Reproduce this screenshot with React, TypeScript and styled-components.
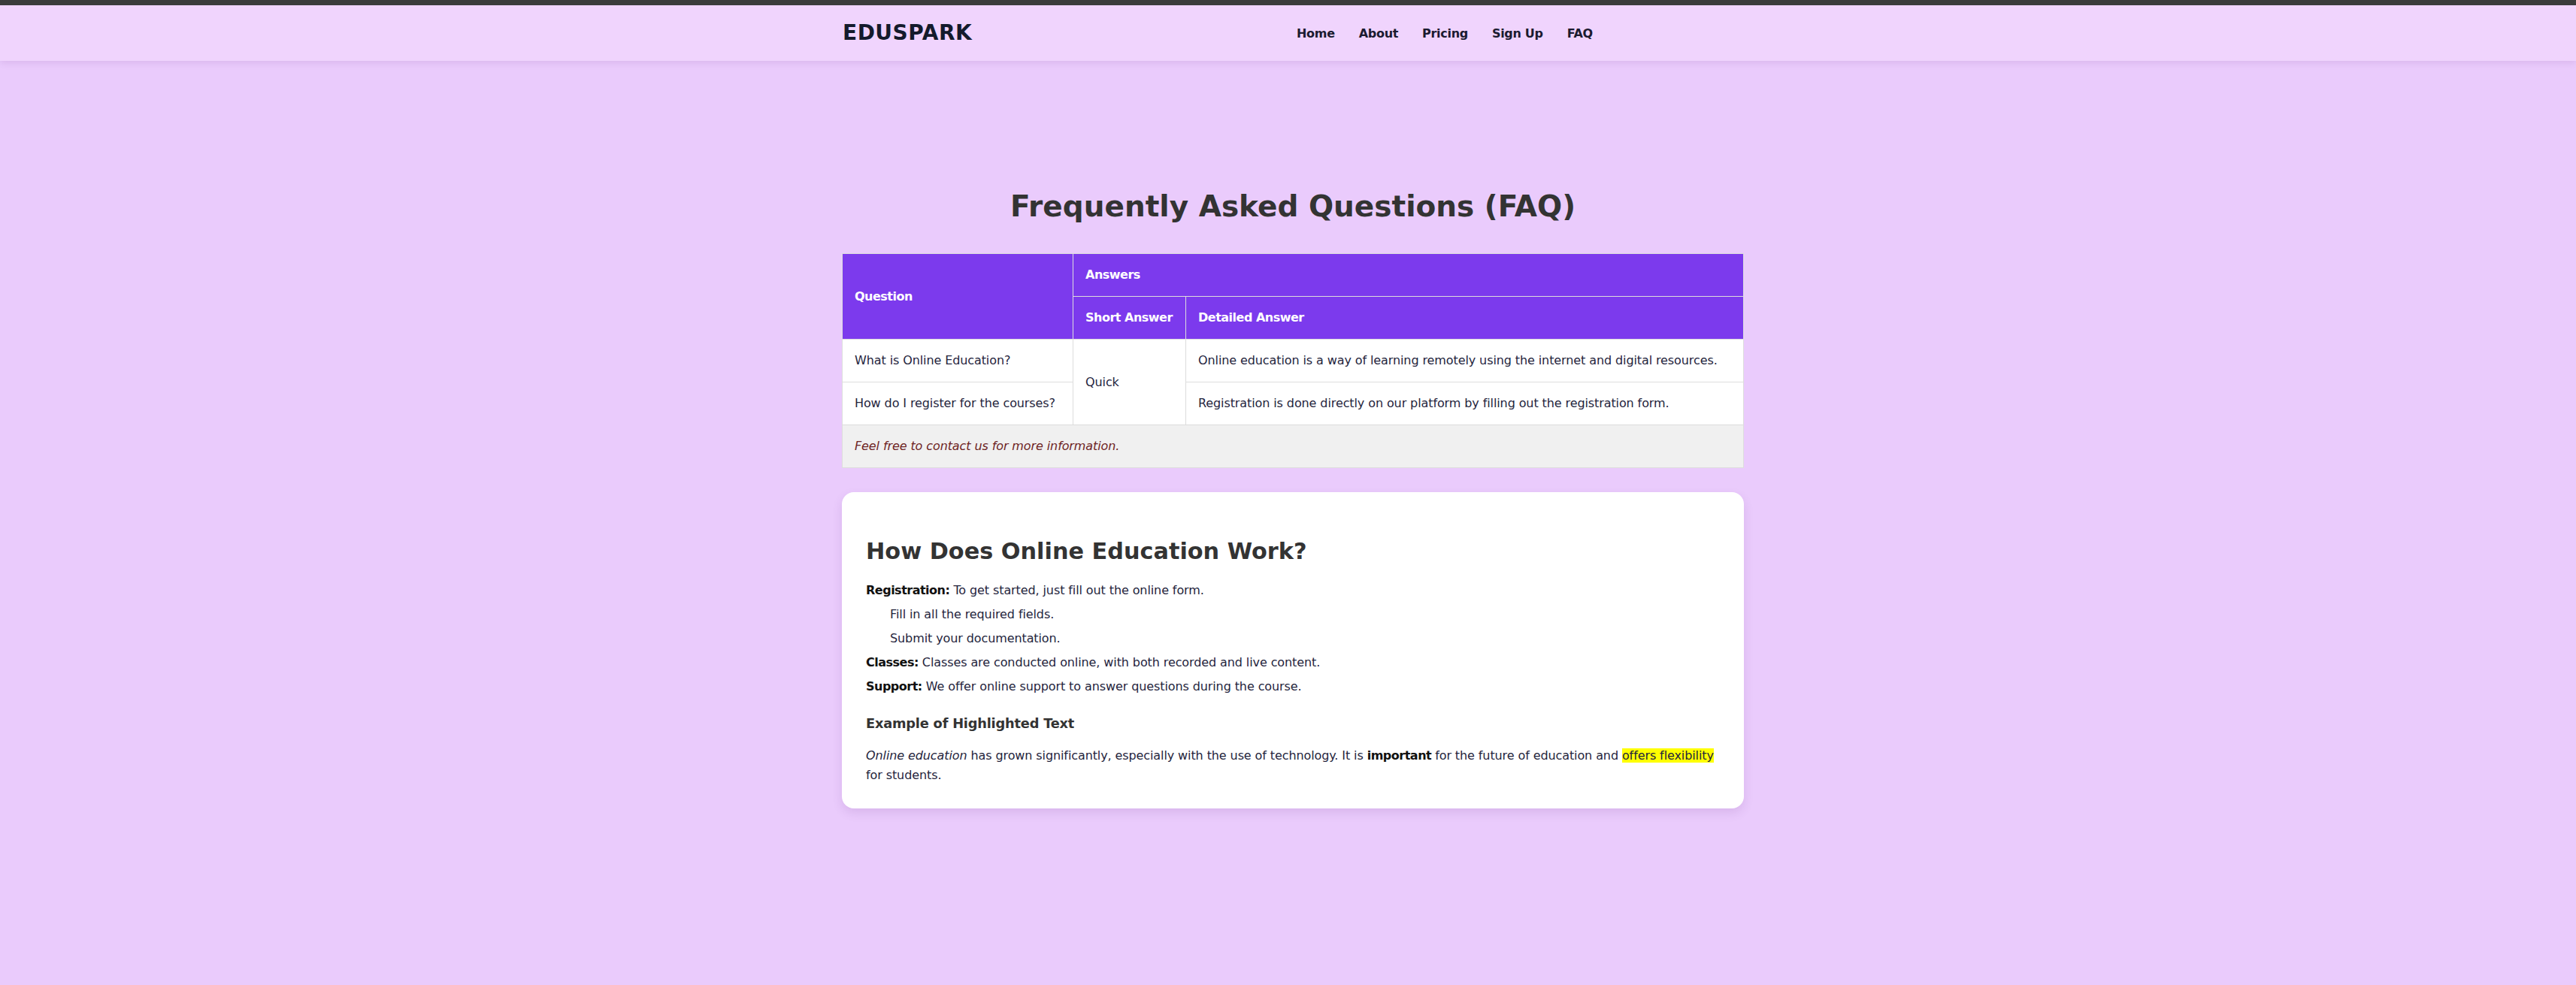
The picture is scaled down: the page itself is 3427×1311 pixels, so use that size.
import React from "react";
import styled, { createGlobalStyle } from "styled-components";

const GlobalStyle = createGlobalStyle`
  html, body {
    margin: 0;
    padding: 0;
  }
  body {
    background: #eacbfc;
    font-family: "DejaVu Sans", "Open Sans", sans-serif;
    color: #25253d;
    font-size: 16px;
  }
  * { box-sizing: border-box; }
`;

const Header = styled.header`
  background: #f0d4fd;
  border-top: 7px solid #3b3b3b;
  height: 81px;
  box-shadow: 0 2px 10px rgba(80, 20, 110, 0.12);
  position: relative;
  z-index: 1;
`;

const Container = styled.div`
  max-width: 1213px;
  padding-left: 13px;
  margin: 0 auto;
`;

const HeaderInner = styled(Container)`
  height: 100%;
  display: flex;
  align-items: center;
`;

const Logo = styled.div`
  width: 173px;
  font-size: 28px;
  font-weight: 800;
  letter-spacing: 0.5px;
  color: #141a2c;
  line-height: 1;
  padding-left: 1px;
  white-space: nowrap;
`;

const Nav = styled.nav`
  display: flex;
  gap: 32px;
  margin-left: 432px;
`;

const NavLink = styled.a`
  font-size: 16px;
  font-weight: 700;
  color: #1b1b30;
  text-decoration: none;
  letter-spacing: -0.3px;
`;

const Main = styled(Container)`
  padding-top: 170px;
  padding-bottom: 80px;
`;

const Title = styled.h1`
  margin: 0 0 38px;
  text-align: center;
  font-size: 39px;
  line-height: 48px;
  font-weight: 800;
  color: #333;
`;

const Table = styled.table`
  width: 100%;
  border-collapse: collapse;
  background: #fff;
`;

const Th = styled.th<{ $w?: number }>`
  background: #7c3aed;
  color: #fff;
  font-weight: 700;
  font-size: 16px;
  letter-spacing: -0.5px;
  text-align: left;
  padding: 16px;
  line-height: 24px;
  border: 1px solid #ddd;
  ${(p) => (p.$w ? `width: ${p.$w}px;` : "")}
`;

const Td = styled.td`
  padding: 16px;
  font-size: 16px;
  letter-spacing: -0.1px;
  line-height: 24px;
  border: 1px solid #ddd;
  color: #25253d;
  vertical-align: middle;
`;

const FootCell = styled(Td)`
  background: #f0f0f0;
  font-style: italic;
  color: #6e2424;
`;

const Card = styled.section`
  margin-top: 32px;
  background: #fff;
  border-radius: 16px;
  padding: 32px 32px 32px;
  box-shadow: 0 6px 14px rgba(90, 30, 120, 0.12);
`;

const H2 = styled.h2`
  margin: 28px 0 20px;
  font-size: 30.3px;
  line-height: 38px;
  font-weight: 700;
  color: #333;
`;

const List = styled.ul<{ $nested?: boolean }>`
  list-style: none;
  margin: 0;
  padding: 0 0 0 ${(p) => (p.$nested ? "32px" : "0")};
`;

const Item = styled.li`
  font-size: 16px;
  letter-spacing: -0.1px;
  line-height: 25.6px;
  margin-bottom: 6.4px;
  color: #25253d;
  & > ul {
    margin-top: 6.4px;
  }
  & > ul > li:last-child {
    margin-bottom: 0;
  }
`;

const Strong = styled.strong`
  font-weight: 700;
  color: #111;
  letter-spacing: -0.5px;
`;

const H3 = styled.h3`
  margin: 25px 0 19px;
  font-size: 17.8px;
  line-height: 22.5px;
  font-weight: 700;
  color: #333;
  letter-spacing: -0.2px;
`;

const Para = styled.p`
  margin: 0;
  font-size: 16px;
  letter-spacing: -0.1px;
  line-height: 25.6px;
  color: #25253d;
`;

const Mark = styled.mark`
  background: #ffff00;
  color: #25253d;
`;

export default function App() {
  return (
    <>
      <GlobalStyle />
      <Header>
        <HeaderInner>
          <Logo>EDUSPARK</Logo>
          <Nav>
            <NavLink href="#">Home</NavLink>
            <NavLink href="#">About</NavLink>
            <NavLink href="#">Pricing</NavLink>
            <NavLink href="#">Sign Up</NavLink>
            <NavLink href="#">FAQ</NavLink>
          </Nav>
        </HeaderInner>
      </Header>
      <Main>
        <Title>Frequently Asked Questions (FAQ)</Title>
        <Table>
          <thead>
            <tr>
              <Th rowSpan={2} $w={307}>Question</Th>
              <Th colSpan={2}>Answers</Th>
            </tr>
            <tr>
              <Th $w={150}>Short Answer</Th>
              <Th>Detailed Answer</Th>
            </tr>
          </thead>
          <tbody>
            <tr>
              <Td>What is Online Education?</Td>
              <Td rowSpan={2}>Quick</Td>
              <Td>Online education is a way of learning remotely using the internet and digital resources.</Td>
            </tr>
            <tr>
              <Td>How do I register for the courses?</Td>
              <Td>Registration is done directly on our platform by filling out the registration form.</Td>
            </tr>
          </tbody>
          <tfoot>
            <tr>
              <FootCell colSpan={3}>Feel free to contact us for more information.</FootCell>
            </tr>
          </tfoot>
        </Table>
        <Card>
          <H2>How Does Online Education Work?</H2>
          <List>
            <Item>
              <Strong>Registration:</Strong> To get started, just fill out the online form.
              <List $nested>
                <Item>Fill in all the required fields.</Item>
                <Item>Submit your documentation.</Item>
              </List>
            </Item>
            <Item>
              <Strong>Classes:</Strong> Classes are conducted online, with both recorded and live content.
            </Item>
            <Item>
              <Strong>Support:</Strong> We offer online support to answer questions during the course.
            </Item>
          </List>
          <H3>Example of Highlighted Text</H3>
          <Para>
            <em>Online education</em> has grown significantly, especially with the use of technology. It is{" "}
            <Strong>important</Strong> for the future of education and <Mark>offers flexibility</Mark> for students.
          </Para>
        </Card>
      </Main>
    </>
  );
}
